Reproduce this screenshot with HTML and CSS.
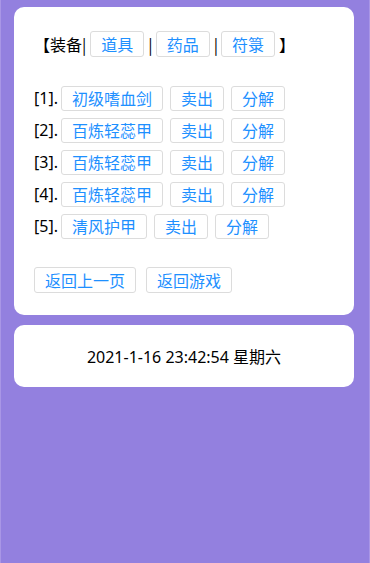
FILE: index.html
```html
<!DOCTYPE html>
<html lang="zh-CN">
<head>
<meta charset="utf-8">
<title>装备</title>
<link rel="stylesheet" href="styles.css">
</head>
<body>
<div class="page">
  <div class="card main">
    <div class="line tabs">
      <span class="txt">【装备|</span>
      <a class="btn">道具</a>
      <span class="sep">|</span>
      <a class="btn">药品</a>
      <span class="sep">|</span>
      <a class="btn">符箓</a>
      <span class="txt close">】</span>
    </div>
    <div class="list">
      <div class="line"><span class="idx">[1].</span><a class="btn">初级嗜血剑</a><a class="btn">卖出</a><a class="btn">分解</a></div>
      <div class="line"><span class="idx">[2].</span><a class="btn">百炼轻蕊甲</a><a class="btn">卖出</a><a class="btn">分解</a></div>
      <div class="line"><span class="idx">[3].</span><a class="btn">百炼轻蕊甲</a><a class="btn">卖出</a><a class="btn">分解</a></div>
      <div class="line"><span class="idx">[4].</span><a class="btn">百炼轻蕊甲</a><a class="btn">卖出</a><a class="btn">分解</a></div>
      <div class="line"><span class="idx">[5].</span><a class="btn">清风护甲</a><a class="btn">卖出</a><a class="btn">分解</a></div>
    </div>
    <div class="line nav">
      <a class="btn">返回上一页</a><a class="btn">返回游戏</a>
    </div>
  </div>
  <div class="card foot">
    <div class="line center">2021-1-16 23:42:54 星期六</div>
  </div>
</div>
</body>
</html>
```
FILE: styles.css
```css
html, body {
  margin: 0;
  padding: 0;
}
body {
  background: #9380df;
  width: 370px;
  height: 563px;
  box-sizing: border-box;
  border-left: 1px solid #a996e6;
  border-right: 1px solid #a996e6;
  font-family: "Noto Sans", "Noto Sans CJK SC", sans-serif;
  font-size: 16px;
  color: #000;
}
.page {
  padding: 7px 15px 0 13px;
  display: flex;
  flex-direction: column;
  gap: 10px;
}
.card {
  background: #fff;
  border-radius: 10px;
}
.main {
  padding: 21px 20px 19px 20px;
}
.line {
  height: 32px;
  display: flex;
  align-items: center;
  white-space: nowrap;
}
.list {
  margin: 22px 0;
}
.btn {
  display: inline-block;
  box-sizing: border-box;
  height: 26px;
  line-height: 24px;
  padding: 0 10px;
  border: 1px solid #dcdcdc;
  border-radius: 3px;
  color: #1e90ff;
  font-family: "Noto Sans CJK SC", sans-serif;
}
.list .btn { height: 25px; line-height: 23px; }
.list .btn + .btn { margin-left: 7px; }
.idx { width: 27px; }
.tabs .txt { font-family: "Noto Sans CJK SC", sans-serif; }
.tabs .txt:first-child { margin-right: 4px; }
.sep { margin: 0 3px 0 4px; color: #000; font-family: "Noto Sans CJK SC", sans-serif; }
.close { margin-left: 4px; }
.nav .btn + .btn { margin-left: 10px; }
.foot {
  padding: 15px 20px;
}
.center {
  justify-content: center;
}
```
